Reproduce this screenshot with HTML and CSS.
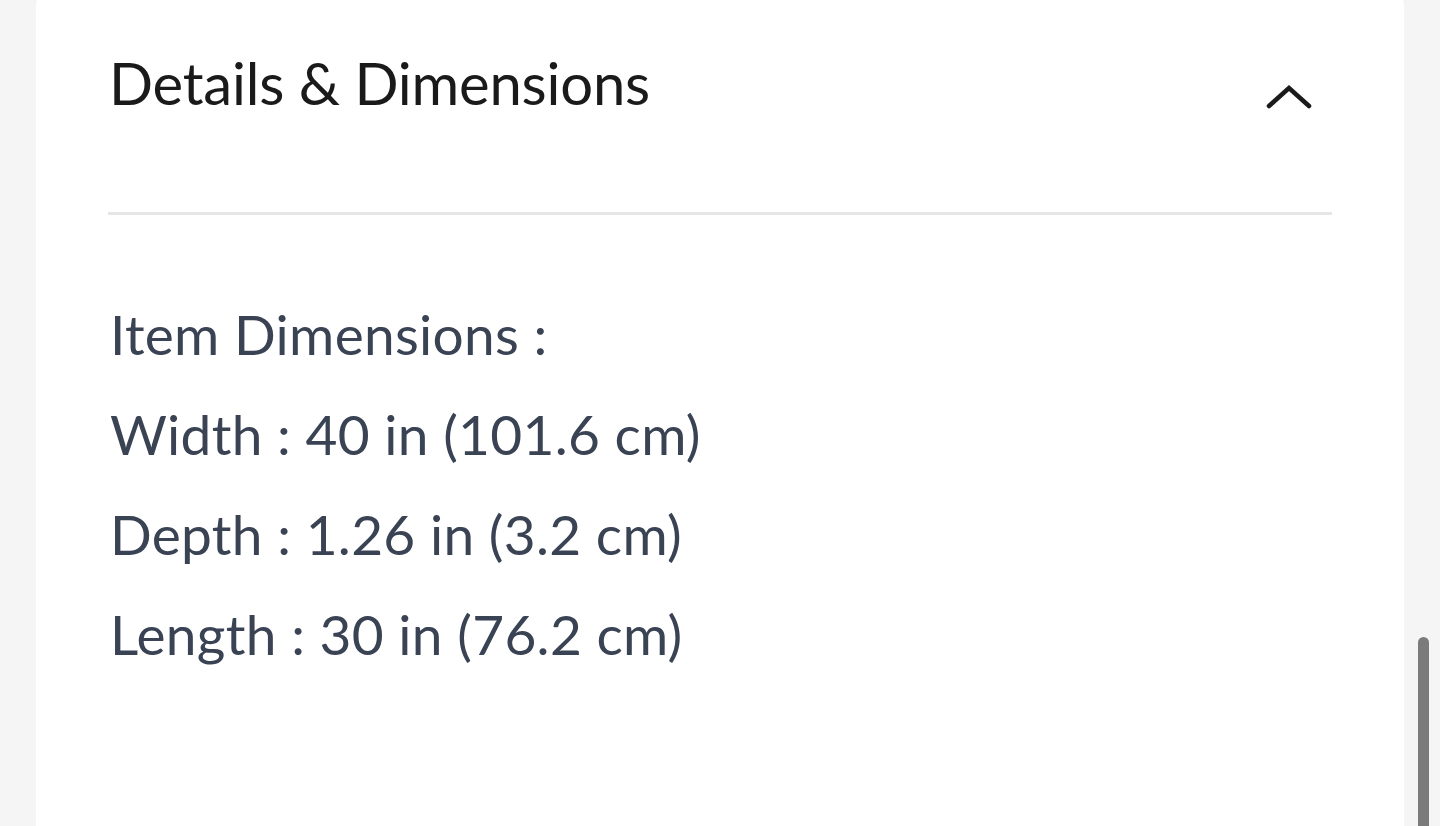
FILE: index.html
```html
<!DOCTYPE html>
<html lang="en">
<head>
    <meta charset="UTF-8">
    <meta name="viewport" content="width=device-width, initial-scale=1.0">
    <title>Details &amp; Dimensions</title>
    <link rel="stylesheet" href="styles.css">
</head>
<body>
    <div class="page">
        <section class="card">
            <div class="accordion-head">
                <h2 class="accordion-title">Details &amp; Dimensions</h2>
                <span class="chevron">
                    <svg width="46" height="26" viewBox="0 0 46 26" fill="none">
                        <path d="M3 22 L23 4 L43 22" stroke="#1a1a1a" stroke-width="4.5" stroke-linecap="round" stroke-linejoin="miter"/>
                    </svg>
                </span>
            </div>
            <div class="divider"></div>
            <div class="accordion-body">
                <p>Item Dimensions :</p>
                <p>Width : 40 in (101.6 cm)</p>
                <p>Depth : 1.26 in (3.2 cm)</p>
                <p>Length : 30 in (76.2 cm)</p>
            </div>
        </section>
    </div>
    <div class="scroll-thumb"></div>
</body>
</html>
```

FILE: styles.css
```css
body {
    margin: 0;
    padding: 0;
    background-color: #f5f5f5;
    font-family: Lato, "Noto Sans", sans-serif;
    height: 826px;
    overflow: hidden;
}

.page {
    padding: 0 36px;
}

.card {
    background-color: #ffffff;
    border-radius: 32px;
    margin-top: -24px;
    padding: 24px 72px 0;
    height: 900px;
}

.accordion-head {
    display: flex;
    justify-content: space-between;
    padding-left: 1px;
    height: 120px;
}

.accordion-title {
    margin: 54px 0 0;
    font-size: 58px;
    font-weight: 400;
    color: #1a1a1a;
    line-height: 1;
    letter-spacing: -0.2px;
}

.chevron {
    display: flex;
    margin: 84px 20px 0 0;
    align-self: flex-start;
}

.divider {
    height: 3px;
    background-color: #e6e6e6;
    margin-top: 92px;
}

.accordion-body {
    padding: 69px 0 0 2px;
    color: #3a4354;
    font-size: 55px;
}

.accordion-body p {
    margin: 0;
    line-height: 100px;
    letter-spacing: 0.3px;
}

.scroll-thumb {
    position: fixed;
    left: 1418px;
    top: 637px;
    width: 11px;
    height: 220px;
    border-radius: 6px;
    background-color: #7b7b7b;
}
```
